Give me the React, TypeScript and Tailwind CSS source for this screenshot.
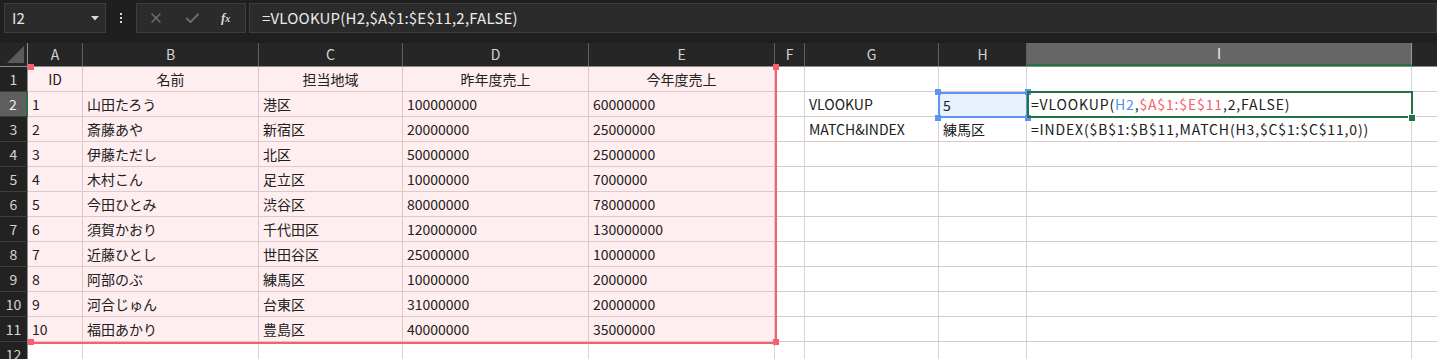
import { X, Check } from "lucide-react";

const COLS = ["A", "B", "C", "D", "E", "F", "G", "H", "I", "J"];
const WIDTHS = [55, 176, 144, 186, 186, 30, 134, 88, 385, 200];

type Row = [string, string, string, string, string];

const HEADER: Row = ["ID", "名前", "担当地域", "昨年度売上", "今年度売上"];
const DATA: Row[] = [
  ["1", "山田たろう", "港区", "100000000", "60000000"],
  ["2", "斎藤あや", "新宿区", "20000000", "25000000"],
  ["3", "伊藤ただし", "北区", "50000000", "25000000"],
  ["4", "木村こん", "足立区", "10000000", "7000000"],
  ["5", "今田ひとみ", "渋谷区", "80000000", "78000000"],
  ["6", "須賀かおり", "千代田区", "120000000", "130000000"],
  ["7", "近藤ひとし", "世田谷区", "25000000", "10000000"],
  ["8", "阿部のぶ", "練馬区", "10000000", "2000000"],
  ["9", "河合じゅん", "台東区", "31000000", "20000000"],
  ["10", "福田あかり", "豊島区", "40000000", "35000000"],
];

const font = { fontFamily: '"Noto Sans CJK JP", "Noto Sans", sans-serif' };

function TopBar() {
  return (
    <div className="h-[43px] bg-[#1f1f1f] flex items-start pt-[3px] pl-[4px]">
      {/* name box */}
      <div className="w-[102px] h-[30px] bg-[#2b2b2b] border border-[#3d3d3d] flex items-center justify-between pl-[7px] pr-[6px]">
        <span className="text-[15px] text-[#e6e6e6]">I2</span>
        <svg width="8" height="5" viewBox="0 0 8 5">
          <path d="M0 0 L8 0 L4 4.5 Z" fill="#d8d8d8" />
        </svg>
      </div>
      {/* dots */}
      <div className="w-[30px] h-[30px] flex flex-col items-center justify-center gap-[2px]">
        <span className="w-[2px] h-[2px] bg-[#d8d8d8]" />
        <span className="w-[2px] h-[2px] bg-[#d8d8d8]" />
        <span className="w-[2px] h-[2px] bg-[#d8d8d8]" />
      </div>
      {/* cancel / enter / fx */}
      <div className="w-[110px] h-[30px] bg-[#2b2b2b] border border-[#3d3d3d] flex items-center pl-[11px] gap-[20px]">
        <X size={16} strokeWidth={2} color="#6f6f6f" />
        <Check size={17} strokeWidth={2.6} color="#6f6f6f" />
        <span className="text-[13px] italic font-bold text-[#d8d8d8]" style={{ fontFamily: '"Liberation Serif", serif' }}>
          f<span className="text-[10px]">x</span>
        </span>
      </div>
      {/* formula */}
      <div className="ml-[3px] flex-1 h-[30px] bg-[#2b2b2b] border border-[#3d3d3d] flex items-center pl-[12px]">
        <span className="text-[15px] text-[#ececec] tracking-[0.2px]">=VLOOKUP(H2,$A$1:$E$11,2,FALSE)</span>
      </div>
    </div>
  );
}

function ColumnHeader() {
  return (
    <div className="flex h-[24px] bg-[#262626] border-b border-[#8c8c8c]">
      <div className="w-[28px] shrink-0 border-r border-[#8c8c8c] relative">
        <svg className="absolute right-[3px] bottom-[3px]" width="17" height="17" viewBox="0 0 17 17">
          <path d="M17 0 L17 17 L0 17 Z" fill="#5a5a5a" />
        </svg>
      </div>
      {COLS.map((c, i) => {
        const active = c === "I";
        return (
          <div
            key={c}
            className={
              "shrink-0 flex items-center justify-center text-[14px] " +
              (active
                ? "bg-[#666666] text-[#f0f0f0] border-b-2 border-[#217346] border-r border-r-[#9a9a9a]"
                : "text-[#d4d4d4] border-r border-[#5e5e5e]")
            }
            style={{ width: WIDTHS[i] }}
          >
            {/* J's label sits past the window edge */}
            {c === "J" ? "" : c}
          </div>
        );
      })}
    </div>
  );
}

type CellProps = { text?: React.ReactNode; pink?: boolean; center?: boolean; wide?: boolean; w: number };

function Cell({ text, pink, center, wide, w }: CellProps) {
  return (
    <div
      className={
        "shrink-0 h-full flex items-center px-[4px] text-[14px] text-[#202020] whitespace-nowrap border-r " +
        (pink ? "bg-[#ffeef0] border-[#dcc7c9] " : "border-[#d4d4d4] ") +
        (center ? "justify-center " : "") +
        (wide ? "tracking-[0.85px]" : "")
      }
      style={{ width: w }}
    >
      {text}
    </div>
  );
}

const vlookup = (
  <span>
    =VLOOKUP(<span className="text-[#4f8ff3]">H2</span>,<span className="text-[#f5606e]">$A$1:$E$11</span>,2,FALSE)
  </span>
);

function SheetRow({ n, cells }: { n: number; cells: React.ReactNode[] }) {
  const inTable = n <= 11;
  const active = n === 2;
  return (
    <div className={"flex h-[25px] border-b " + (inTable ? "border-[#dcc7c9]" : "border-[#d4d4d4]")}>
      <div
        className={
          "w-[28px] shrink-0 flex items-center justify-center text-[14px] border-b border-[#3e3e3e] -mb-px " +
          (active
            ? "bg-[#5e5e5e] text-[#f0f0f0] border-r-2 border-r-[#217346]"
            : "bg-[#222222] text-[#d4d4d4] border-r border-r-[#8c8c8c]")
        }
      >
        {n}
      </div>
      {COLS.map((c, i) => (
        <Cell
          key={c}
          w={WIDTHS[i]}
          text={cells[i]}
          pink={i < 5 && inTable}
          center={n === 1 && i < 5}
          wide={c === "I"}
        />
      ))}
    </div>
  );
}

function Handle({ className }: { className: string }) {
  return <div className={"absolute w-[6px] h-[6px] " + className} />;
}

export default function App() {
  const rows: React.ReactNode[][] = [];
  rows.push([...HEADER]);
  DATA.forEach((d, idx) => {
    const extra: React.ReactNode[] = ["", "", "", ""];
    if (idx === 0) {
      extra[1] = "VLOOKUP";
      extra[2] = "5";
      extra[3] = vlookup;
    }
    if (idx === 1) {
      extra[1] = "MATCH&INDEX";
      extra[2] = "練馬区";
      extra[3] = "=INDEX($B$1:$B$11,MATCH(H3,$C$1:$C$11,0))";
    }
    rows.push([...d, ...extra]);
  });
  rows.push([]);

  return (
    <div className="w-[1437px] h-[359px] overflow-hidden bg-white" style={font}>
      <TopBar />
      <ColumnHeader />
      <div className="relative">
        {rows.map((cells, i) => (
          <SheetRow key={i} n={i + 1} cells={cells} />
        ))}

        {/* range highlight A1:E11 */}
        <div className="absolute left-[28px] top-0 w-[749px] h-[277px] border-r-2 border-b-2 border-[#f5606e] pointer-events-none" />
        <Handle className="bg-[#f5606e] left-[28px] -top-[3px] w-[3px]" />
        <Handle className="bg-[#f5606e] left-[773px] -top-[3px]" />
        <Handle className="bg-[#f5606e] left-[28px] top-[272px] w-[3px]" />
        <Handle className="bg-[#f5606e] left-[773px] top-[272px]" />

        {/* H2 reference */}
        <div className="absolute left-[938px] top-[25px] w-[90px] h-[26px] border-2 border-[#5b95f0] bg-[#e9f1fd] flex items-center pl-[3px] text-[14px] text-[#202020]">
          5
        </div>
        <Handle className="bg-[#5b95f0] left-[935px] top-[22px]" />
        <Handle className="bg-[#5b95f0] left-[1025px] top-[22px]" />
        <Handle className="bg-[#5b95f0] left-[935px] top-[48px]" />
        <Handle className="bg-[#5b95f0] left-[1025px] top-[48px]" />

        {/* active cell I2 */}
        <div className="absolute left-[1027px] top-[24px] w-[386px] h-[27px] border-2 border-[#217346] pointer-events-none" />
        <div className="absolute left-[1408px] top-[47px] w-[6px] h-[6px] bg-[#217346] border border-white box-content" />
      </div>
    </div>
  );
}
